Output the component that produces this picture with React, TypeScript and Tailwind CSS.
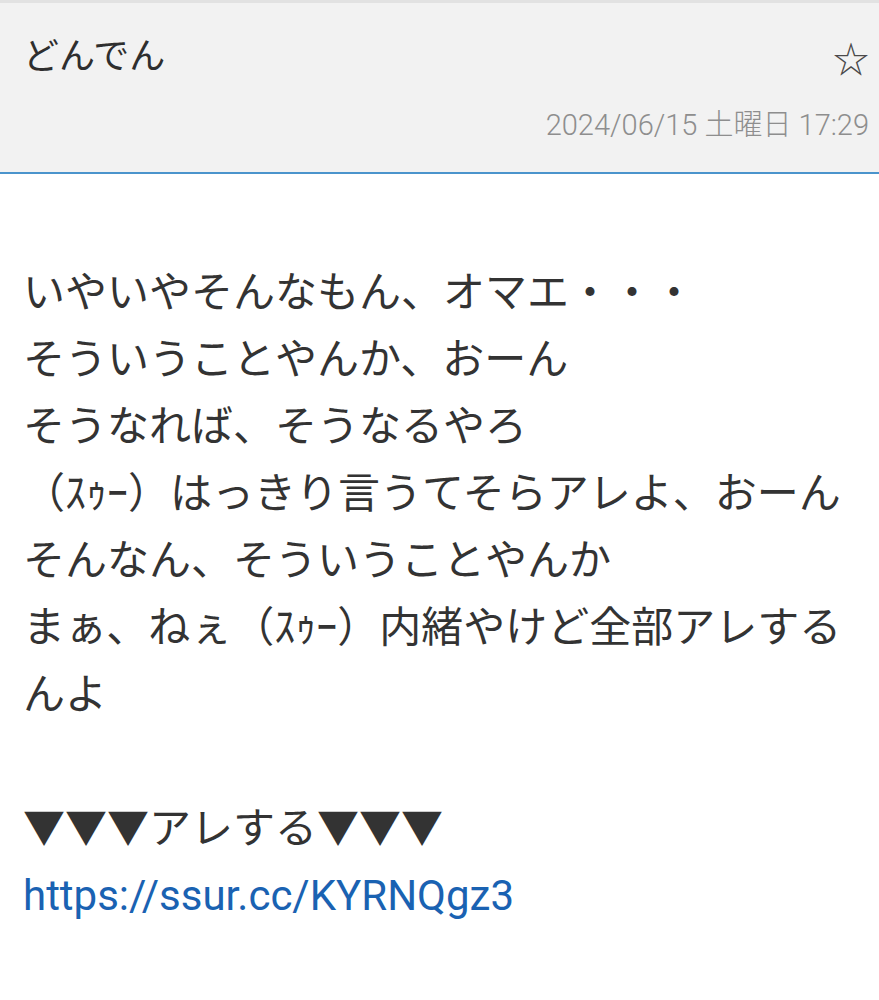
export default function App() {
    const lines = [
        "いやいやそんなもん、オマエ・・・",
        "そういうことやんか、おーん",
        "そうなれば、そうなるやろ",
        "（ｽｩｰ）はっきり言うてそらアレよ、おーん",
        "そんなん、そういうことやんか",
        "まぁ、ねぇ（ｽｩｰ）内緒やけど全部アレするんよ",
    ];

    return (
        <div className="min-h-screen bg-white font-['Roboto','Noto_Sans_CJK_JP',sans-serif]">
            <header className="border-t-[3px] border-b-2 border-t-[#e2e2e2] border-b-[#4a94cc] bg-[#f2f2f2] pt-[28px] pb-[27px] pl-[23px] pr-[10px]">
                <div className="flex h-[52px] items-center justify-between">
                    <h1 className="text-[36px] leading-[52px] text-[#2e2e2e]">どんでん</h1>
                    <span className="mt-2 text-[36px] leading-none text-[#4a4a4a]">☆</span>
                </div>
                <div className="mt-[22px] text-right text-[29px] font-light leading-[40px] text-[#8e8e8e]">
                    2024/06/15 土曜日 17:29
                </div>
            </header>

            <main className="pt-[85px] pl-[23px] pr-[25px] text-[42px] leading-[67px] text-[#333333]">
                {lines.map((line) => (
                    <p key={line}>{line}</p>
                ))}
                <p className="h-[67px]" />
                <p>▼▼▼アレする▼▼▼</p>
                <a href="#" className="text-[#1a62b2]">
                    https://ssur.cc/KYRNQgz3
                </a>
            </main>
        </div>
    );
}
